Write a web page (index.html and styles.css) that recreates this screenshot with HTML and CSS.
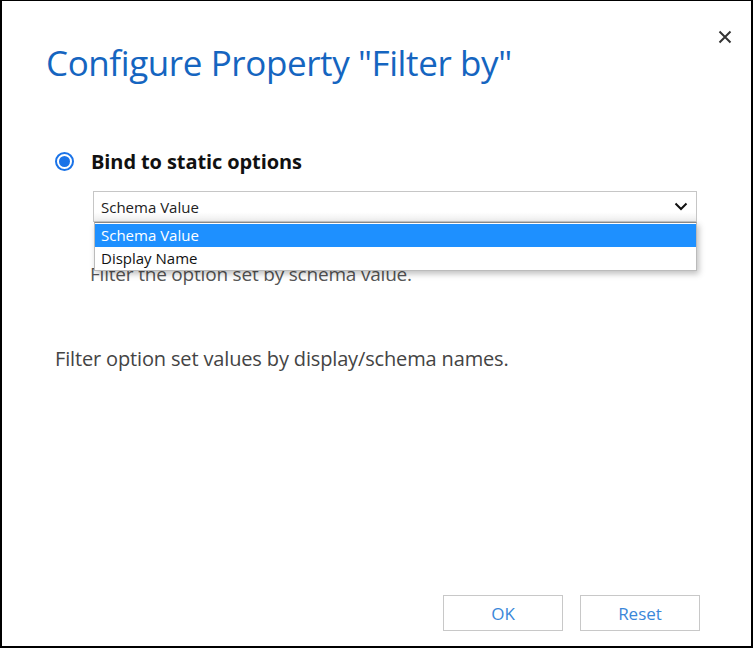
FILE: index.html
```html
<!DOCTYPE html>
<html>
<head>
<meta charset="utf-8">
<link rel="stylesheet" href="styles.css">
</head>
<body>
<div class="dialog">
  <button class="close" aria-label="Close">
    <svg width="14" height="14" viewBox="0 0 14 14"><path d="M1.5 1.5 L12.5 12.5 M12.5 1.5 L1.5 12.5" stroke="#333" stroke-width="2" fill="none"/></svg>
  </button>
  <h1 class="title">Configure Property "Filter by"</h1>
  <div class="option">
    <span class="radio"><span class="dot"></span></span>
    <span class="option-label">Bind to static options</span>
  </div>
  <div class="select-wrap">
    <div class="select">
      <span>Schema Value</span>
      <svg class="chev" width="14" height="9" viewBox="0 0 14 9"><path d="M1.5 1.5 L7 7 L12.5 1.5" stroke="#111" stroke-width="2" fill="none"/></svg>
    </div>
    <ul class="menu">
      <li class="item selected">Schema Value</li>
      <li class="item">Display Name</li>
    </ul>
    <p class="hint">Filter the option set by schema value.</p>
  </div>
  <p class="desc">Filter option set values by display/schema names.</p>
  <div class="spacer"></div>
  <div class="buttons">
    <button class="btn">OK</button>
    <button class="btn">Reset</button>
  </div>
</div>
</body>
</html>
```
FILE: styles.css
```css
html, body { margin: 0; padding: 0; background: #fff; }
body { font-family: "Open Sans", "Noto Sans", sans-serif; }
.dialog {
  position: relative;
  box-sizing: border-box;
  width: 753px;
  height: 648px;
  border: 2px solid #000;
  border-top-width: 1px;
  display: flex;
  flex-direction: column;
}
.close {
  position: absolute;
  right: 19px;
  top: 29px;
  border: 0;
  background: none;
  padding: 0;
  width: 14px;
  height: 14px;
  line-height: 0;
}
.title {
  margin: 36px 0 0 44px;
  font-weight: 400;
  font-size: 35px;
  line-height: 52px;
  color: #1565c0;
  letter-spacing: -0.4px;
}
.option {
  display: flex;
  align-items: center;
  margin: 60px 0 0 53px;
  height: 24px;
}
.radio {
  box-sizing: border-box;
  width: 19px; height: 19px;
  border-radius: 50%;
  border: 2px solid #1a73e8;
  display: flex; align-items: center; justify-content: center;
}
.dot { width: 11px; height: 11px; border-radius: 50%; background: #1a73e8; }
.option-label {
  margin-left: 17px;
  font-weight: 700;
  font-size: 20px;
  color: #111;
  letter-spacing: -0.1px;
}
.select-wrap {
  position: relative;
  margin: 18px 0 0 91px;
  width: 604px;
}
.select {
  box-sizing: border-box;
  height: 31px;
  border: 1px solid #c6c6c6;
  background: linear-gradient(#fff 70%, #eee);
  display: flex;
  align-items: center;
  justify-content: space-between;
  padding: 0 7px 0 7px;
  font-size: 15px;
  color: #222;
}
.chev { margin-right: 1px; }
.menu {
  position: absolute;
  left: 1px; right: 0; top: 31px;
  margin: 0; padding: 1px 0 0 0;
  list-style: none;
  background: #fff;
  border: 1px solid #bbb;
  border-top: 1px solid #888;
  box-shadow: 2px 3px 6px rgba(0,0,0,0.25);
  z-index: 2;
}
.item {
  height: 23px;
  line-height: 22px;
  padding-left: 6px;
  font-size: 15px;
  color: #111;
}
.item.selected { background: #1e90ff; color: #fff; }
.hint {
  margin: 39px 0 0 -3px;
  font-size: 19px;
  color: #555;
  line-height: 26px;
  letter-spacing: -0.2px;
}
.desc {
  margin: 59px 0 0 53px;
  font-size: 20px;
  color: #444;
  line-height: 26px;
  letter-spacing: -0.15px;
}
.spacer { flex: 1; }
.buttons {
  display: flex;
  justify-content: flex-end;
  gap: 17px;
  padding: 0 51px 15px 0;
}
.btn {
  width: 120px;
  height: 36px;
  box-sizing: border-box;
  border: 1px solid #c8c8c8;
  background: #fff;
  color: #3a87d9;
  font-family: "Open Sans", "Noto Sans", sans-serif;
  font-size: 17px;
  padding: 0;
}
```
